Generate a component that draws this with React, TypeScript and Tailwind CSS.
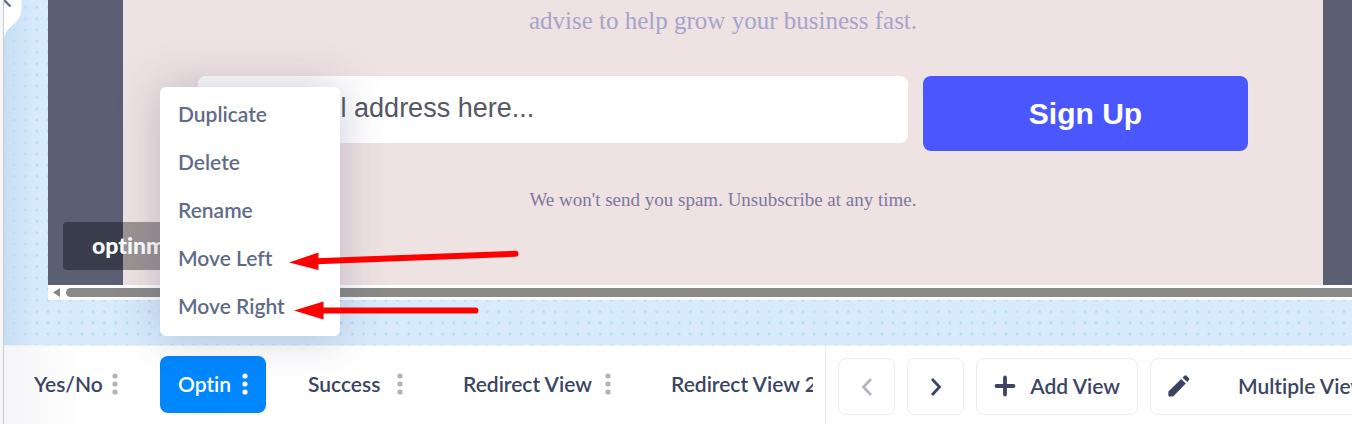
import clsx from 'clsx';

const views = [
  { name: 'Yes/No', width: 'w-[120px]' },
  { name: 'Optin', width: 'w-[106px]', active: true },
  { name: 'Success', width: 'w-[131px]' },
  { name: 'Redirect View', width: 'w-[184px]' },
  { name: 'Redirect View 2', width: 'w-[208px]' },
];

const menuItems = ['Duplicate', 'Delete', 'Rename', 'Move Left', 'Move Right'];

const DotGrid = () => (
  <svg className="absolute inset-0 h-full w-full" aria-hidden="true">
    <defs>
      <pattern id="dots" x="4.6" y="1.7" width="11.27" height="11.27" patternUnits="userSpaceOnUse">
        <circle cx="5.6" cy="5.6" r="1.5" fill="#b7dcf3" />
      </pattern>
    </defs>
    <rect width="100%" height="100%" fill="url(#dots)" />
  </svg>
);

const IconDots = () => (
  <svg width="6" height="22" viewBox="0 0 6 22" fill="currentColor" aria-hidden="true">
    <circle cx="3" cy="3" r="2.6" />
    <circle cx="3" cy="11" r="2.6" />
    <circle cx="3" cy="19" r="2.6" />
  </svg>
);

const IconChevron = ({ d }: { d: string }) => (
  <svg width="12" height="20" viewBox="0 0 12 20" fill="none" stroke="currentColor" strokeWidth="2.8" aria-hidden="true">
    <path d={d} />
  </svg>
);

const IconPlus = () => (
  <svg width="22" height="22" viewBox="0 0 22 22" stroke="currentColor" strokeWidth="3.8" strokeLinecap="round" aria-hidden="true">
    <path d="M11 2.5v17M2.5 11h17" />
  </svg>
);

const IconPencil = () => (
  <svg width="22" height="22" viewBox="0 0 22 22" fill="currentColor" aria-hidden="true">
    <path d="M.4 16.6 13.2 3.9l4.6 4.6L5.2 21.4H1.6a1.2 1.2 0 0 1-1.2-1.2z" />
    <path d="M14.6 2.5 16.4.8a1.6 1.6 0 0 1 2.2 0l2.2 2.2a1.6 1.6 0 0 1 0 2.2l-1.7 1.9z" />
  </svg>
);

const ViewMenu = () => (
  <ul className="absolute bottom-full left-0 z-20 mb-5 w-[180px] rounded-md bg-white pt-1 pb-[5px] shadow-[0_0_45px_rgba(60,65,110,0.27)]">
    {menuItems.map((item) => (
      <li key={item}>
        <button type="button" className="flex h-12 w-full items-center px-[18px] pb-[2px] text-left text-[#5f6b87]">
          {item}
        </button>
      </li>
    ))}
  </ul>
);

const Arrows = () => (
  <svg
    className="pointer-events-none absolute top-[240px] left-[280px] z-30"
    width="250"
    height="90"
    viewBox="280 240 250 90"
    stroke="#fe0000"
    strokeLinecap="round"
    aria-hidden="true"
  >
    <path d="M316 261.3 515.5 253.7M321 310.5H475.5" strokeWidth="6" />
    <path d="M289 262.5 318.5 252.5V270zM294 310.5 323.5 301.5V319.5z" fill="#fe0000" stroke="none" />
  </svg>
);

const Preview = () => (
  <div className="relative ml-11">
    <div className="flex h-[285px] bg-[#5a5f73]">
      <div className="w-[75px] shrink-0" />
      <div className="min-w-0 flex-1 bg-[#eee2e2] px-[75px] pt-[5px] text-center font-['Liberation_Serif',serif]">
        <p className="text-[25px] leading-8 text-[#a5a5cb]">advise to help grow your business fast.</p>
        <form className="mt-[39px] flex items-start gap-[15px] font-['Liberation_Sans',sans-serif]">
          <input
            type="email"
            aria-label="Email address"
            placeholder="Your email address here..."
            className="h-[67px] min-w-0 flex-1 rounded-lg bg-white px-[22px] pb-[2px] text-[27px] text-[#555762] placeholder:text-[#555762]"
          />
          <button type="button" className="h-[75px] w-[325px] rounded-lg bg-[#4a57ff] text-[30px] font-bold text-white">
            Sign Up
          </button>
        </form>
        <p className="mt-[37px] text-[19px] leading-6 text-[#7d789f]">We won't send you spam. Unsubscribe at any time.</p>
      </div>
      <div className="w-[29px] shrink-0" />
    </div>
    <div className="flex h-[15px] items-center gap-[3px] bg-white pl-[5px]">
      <svg width="10" height="9" viewBox="0 0 10 9" fill="#858585" aria-hidden="true">
        <path d="M0 4.5 7 0v9z" />
      </svg>
      <div className="h-[9px] flex-1 rounded-l-full bg-[#8a8a8a]" />
    </div>
    <div className="absolute top-[222px] left-[15px] flex h-12 w-[180px] items-center rounded bg-black/35 pl-[29px] pb-[2px] font-['Lato',sans-serif] text-[23px] font-black text-white">
      optinmonster
    </div>
  </div>
);

const SideHandle = () => (
  <button type="button" aria-label="Collapse panel" className="absolute top-0 left-0 z-10 text-[#66708f]">
    <svg width="20" height="42" viewBox="0 0 20 42" aria-hidden="true">
      <path d="M0 0H17.5V9C17.5 25 0 25 0 41z" fill="#fff" />
      <path d="M-1-1 6.5 6.5" stroke="currentColor" strokeWidth="2.4" />
    </svg>
  </button>
);

const ViewBar = () => (
  <div className="flex h-[79px] border-t border-[#edf1f5] bg-white text-[#3b4563]">
    <div className="flex min-w-0 flex-1 gap-6 overflow-x-clip bg-linear-to-r from-[#f5f5f7] to-white to-10% pt-[10px] pl-3">
      {views.map((view) => (
        <div key={view.name} className={clsx('relative h-[57px] shrink-0', view.width)}>
          <button
            type="button"
            className={clsx(
              'flex h-full w-full items-center justify-between rounded-lg px-[18px] pb-[2px] whitespace-nowrap',
              view.active && 'bg-[#0087ff] text-white'
            )}
          >
            {view.name}
            <span className={view.active ? 'text-white' : 'text-[#b3b3b6]'}>
              <IconDots />
            </span>
          </button>
          {view.active && <ViewMenu />}
        </div>
      ))}
    </div>
    <div className="ml-3 flex w-[527px] shrink-0 gap-3 overflow-hidden border-l border-[#e6ebf1] pt-3 pl-3">
      <button
        type="button"
        disabled
        aria-label="Previous view"
        className="flex h-[57px] w-[57px] shrink-0 items-center justify-center rounded-lg border border-[#e9edf1] text-[#b5b8c1]"
      >
        <IconChevron d="M10 2 2.5 10 10 18" />
      </button>
      <button
        type="button"
        aria-label="Next view"
        className="flex h-[57px] w-[57px] shrink-0 items-center justify-center rounded-lg border border-[#e9edf1]"
      >
        <IconChevron d="M2 2 9.5 10 2 18" />
      </button>
      <button
        type="button"
        className="flex h-[57px] w-[162px] shrink-0 items-center justify-between rounded-lg border border-[#e9edf1] px-[17px] pb-[2px] whitespace-nowrap"
      >
        <IconPlus />
        Add View
      </button>
      <button
        type="button"
        className="flex h-[57px] w-[260px] shrink-0 items-center gap-12 rounded-lg border border-[#e9edf1] pb-[2px] pl-[17px] whitespace-nowrap"
      >
        <IconPencil />
        Multiple Views
      </button>
    </div>
  </div>
);

const App = () => {
  return (
    <div className="relative flex overflow-hidden bg-white font-['Lato',sans-serif] text-[21px] leading-6 font-semibold [font-variant-ligatures:none]">
      <div className="w-1 shrink-0 border-r border-[#c9ced6] bg-[#f7f7f7]" />
      <div className="min-w-0 flex-1">
        <div className="relative bg-[#d7ebfd] pb-[45px] font-normal">
          <div className="absolute inset-y-0 left-0 w-8 bg-linear-to-r from-[#c8def2] to-transparent" />
          <DotGrid />
          <SideHandle />
          <Preview />
        </div>
        <ViewBar />
      </div>
      <Arrows />
    </div>
  );
};

export default App;
